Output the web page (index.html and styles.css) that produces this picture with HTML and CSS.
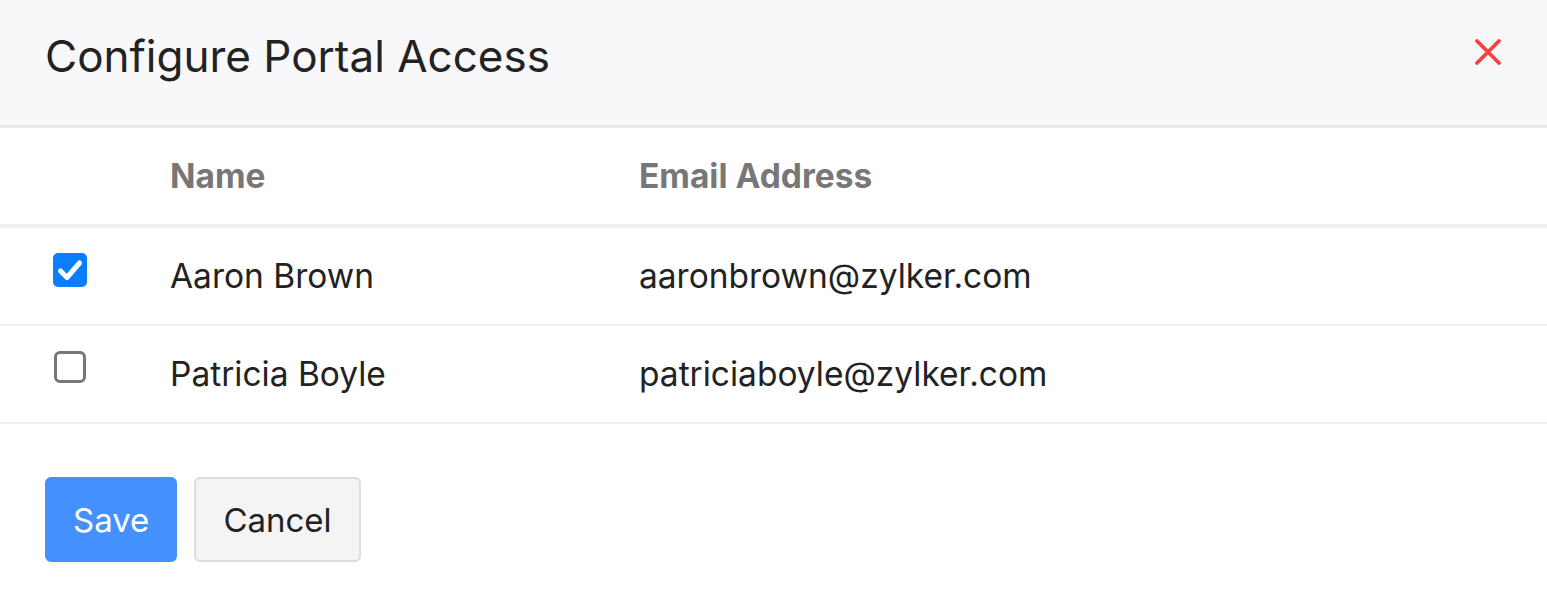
FILE: index.html
```html
<!DOCTYPE html>
<html lang="en">
<head>
  <meta charset="UTF-8">
  <title>Configure Portal Access</title>
  <link rel="stylesheet" href="styles.css">
</head>
<body>
  <div class="modal-header">
    <h1>Configure Portal Access</h1>
    <button class="close" aria-label="Close">
      <svg width="26" height="26" viewBox="0 0 26 26"><path d="M2 2L24 24M24 2L2 24" stroke="#f44242" stroke-width="3.8" stroke-linecap="round"/></svg>
    </button>
  </div>

  <table class="contacts">
    <thead>
      <tr>
        <th class="check"></th>
        <th class="name">Name</th>
        <th>Email Address</th>
      </tr>
    </thead>
    <tbody>
      <tr>
        <td class="check">
          <span class="box checked">
            <svg width="34" height="34" viewBox="0 0 34 34"><path d="M7.5 18L14 24.5L26.5 10" fill="none" stroke="#fff" stroke-width="5" stroke-linecap="round" stroke-linejoin="round"/></svg>
          </span>
        </td>
        <td class="name">Aaron Brown</td>
        <td>aaronbrown@zylker.com</td>
      </tr>
      <tr>
        <td class="check"><span class="box"></span></td>
        <td class="name">Patricia Boyle</td>
        <td>patriciaboyle@zylker.com</td>
      </tr>
    </tbody>
  </table>

  <div class="footer">
    <button class="btn primary">Save</button>
    <button class="btn">Cancel</button>
  </div>
</body>
</html>
```

FILE: styles.css
```css
body { margin: 0; font-family: Inter, "Noto Sans", sans-serif; color: #212529; background: #fff; }

.modal-header { height: 127px; box-sizing: border-box; background: #f8f8fa; display: flex; align-items: center; justify-content: space-between; padding: 0 46px 14px 45px; border-bottom: 2px solid #e6e6e8; box-shadow: 0 1px 0 #efefef; }
.modal-header h1 { margin: 0; font-size: 44px; font-weight: 400; color: #222; }
.close { background: none; border: none; padding: 0; margin-bottom: 7px; cursor: pointer; display: flex; }

.contacts { width: 100%; border-collapse: collapse; margin-top: 1px; }
.contacts th { height: 96px; text-align: left; font-size: 33.5px; font-weight: 700; color: #777; border-bottom: 4px solid #eeeeee; padding: 0; }
.contacts td { height: 96px; font-size: 33.5px; color: #222; border-bottom: 2px solid #eeeeee; padding: 0; }
.contacts .check { width: 117px; padding-left: 53px; vertical-align: top; }
.contacts th.check { vertical-align: middle; }
.contacts .name { width: 469px; }
.contacts td.check { padding-top: 25px; box-sizing: border-box; }

.box { display: flex; align-items: center; justify-content: center; width: 26px; height: 26px; border: 3px solid #777; border-radius: 6px; box-sizing: content-box; margin-left: 1px; }
.box.checked { width: 34px; height: 34px; border: none; background: #0a7eff; border-radius: 5px; margin-left: 0; }

.footer { padding: 53px 45px; display: flex; gap: 17px; }
.btn { font-family: Inter, "Noto Sans", sans-serif; font-size: 33px; height: 85px; padding: 0 27px; border: 2px solid #dddddd; border-radius: 6px; background: #f4f4f4; color: #222; cursor: pointer; }
.btn.primary { background: #4490fd; border-color: #4490fd; color: #fff; padding: 0 26px; }
```
